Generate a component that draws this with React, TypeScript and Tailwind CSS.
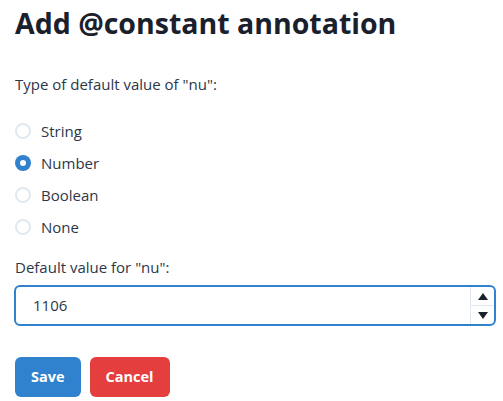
import { useState } from 'react';

const options = ['String', 'Number', 'Boolean', 'None'];

export default function App() {
  const [selected, setSelected] = useState('Number');
  const [value, setValue] = useState('1106');

  return (
    <div className="w-[503px] h-[401px] bg-white pl-[15px] pr-[7px] pt-[3px] text-[#2d3748]" style={{ fontFamily: '"Open Sans", "Noto Sans", sans-serif' }}>
      <h1 className="text-[28.5px] font-bold leading-[40px] text-[#1a202c]">Add @constant annotation</h1>

      <p className="mt-[30px] text-[15px] leading-[22px]">Type of default value of "nu":</p>

      {/* Radio group */}
      <div className="mt-[25px] flex flex-col gap-[10px]">
        {options.map((opt) => (
          <label key={opt} className="flex items-center gap-[10px] h-[22px] cursor-pointer" onClick={() => setSelected(opt)}>
            {selected === opt ? (
              <span className="w-[16px] h-[16px] rounded-full bg-[#3182ce] flex items-center justify-center">
                <span className="w-[6px] h-[6px] rounded-full bg-white" />
              </span>
            ) : (
              <span className="w-[16px] h-[16px] rounded-full border-2 border-[#e2e8f0] bg-white" />
            )}
            <span className="text-[15px]">{opt}</span>
          </label>
        ))}
      </div>

      <p className="mt-[18px] text-[15px] leading-[22px]">Default value for "nu":</p>

      {/* Number input */}
      <div className="mt-[7px] -ml-[1px] h-[41px] flex rounded-[6px] border-2 border-[#3182ce] overflow-hidden">
        <input
          value={value}
          onChange={(e) => setValue(e.target.value)}
          className="flex-1 min-w-0 pl-[17px] text-[15px] outline-none bg-transparent text-[#2d3748]"
        />
        <div className="w-[24px] flex flex-col border-l border-[#e2e8f0]">
          <button className="flex-1 flex items-center justify-center">
            <svg width="10" height="7" viewBox="0 0 10 7"><path d="M5 0L10 7H0Z" fill="#1a202c" /></svg>
          </button>
          <button className="flex-1 flex items-center justify-center border-t border-[#e2e8f0]">
            <svg width="10" height="7" viewBox="0 0 10 7"><path d="M0 0H10L5 7Z" fill="#1a202c" /></svg>
          </button>
        </div>
      </div>

      {/* Actions */}
      <div className="mt-[31px] flex gap-[9px]">
        <button className="h-[40px] px-[16px] rounded-[6px] bg-[#3182ce] text-white font-bold text-[14.5px]">Save</button>
        <button className="h-[40px] px-[16px] rounded-[6px] bg-[#e53e3e] text-white font-bold text-[14.5px]">Cancel</button>
      </div>
    </div>
  );
}
